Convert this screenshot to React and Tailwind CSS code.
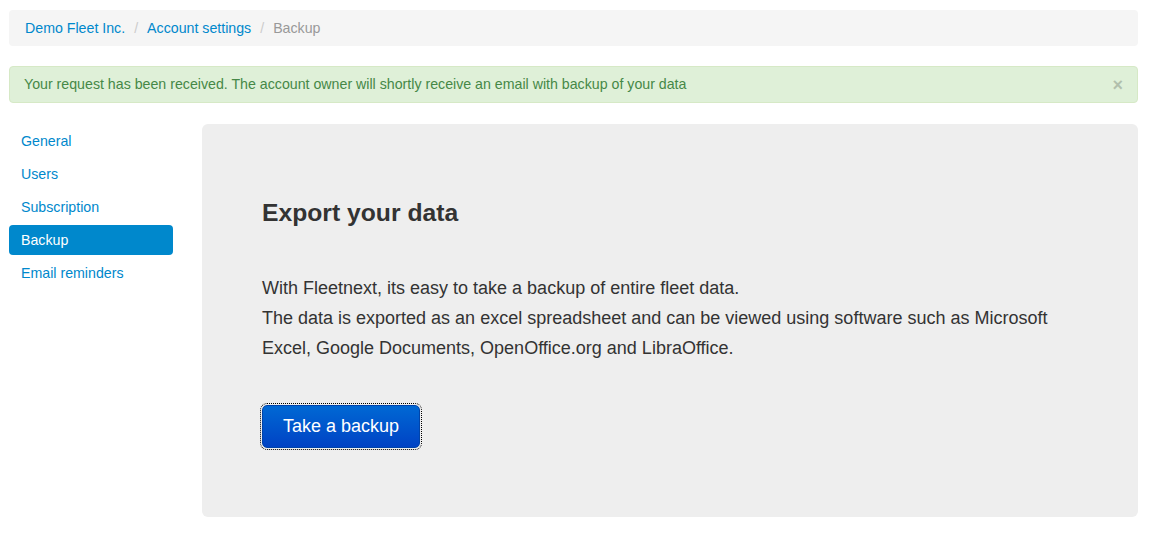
import React from 'react';

const navItems = ['General', 'Users', 'Subscription', 'Backup', 'Email reminders'];

export default function App() {
  return (
    <div className="min-h-[537px] bg-white pl-[9px] pr-[22px] pt-[10px] text-[14.2px] text-[#333] font-['Liberation_Sans',Arial,sans-serif]">
      {/* breadcrumb */}
      <div className="flex h-[36px] items-center rounded-[4px] bg-[#f5f5f5] px-4 pt-px">
        <a className="text-[#0088cc]">Demo Fleet Inc.</a>
        <span className="px-[9px] text-[#ccc]">/</span>
        <a className="text-[#0088cc]">Account settings</a>
        <span className="px-[9px] text-[#ccc]">/</span>
        <span className="text-[#999]">Backup</span>
      </div>

      {/* alert */}
      <div className="mt-[20px] flex h-[37px] items-center justify-between rounded-[4px] border border-[#d6e9c6] bg-[#dff0d8] pl-[14px] pr-[14px] text-[#468847]">
        <span>Your request has been received. The account owner will shortly receive an email with backup of your data</span>
        <span className="text-[18px] font-bold leading-none text-black opacity-20">×</span>
      </div>

      <div className="mt-[21px] flex gap-[29px]">
        <ul className="flex w-[164px] shrink-0 flex-col gap-[3px] pt-[2px]">
          {navItems.map((item) => (
            <li
              key={item}
              className={
                item === 'Backup'
                  ? 'flex h-[30px] items-center rounded-[4px] bg-[#0088cc] px-3 pt-px text-white'
                  : 'flex h-[30px] items-center px-3 pt-px text-[#0088cc]'
              }
            >
              {item}
            </li>
          ))}
        </ul>

        <div className="flex-1 rounded-[6px] bg-[#eeeeee] px-[60px] pt-[76px] pb-[69px]">
          <h1 className="text-[24.7px] font-bold leading-[26px] text-[#333]">Export your data</h1>
          <p className="mt-[47px] text-[18px] leading-[30px] text-[#333]">
            With Fleetnext, its easy to take a backup of entire fleet data.
            <br />
            The data is exported as an excel spreadsheet and can be viewed using software such as Microsoft Excel, Google Documents, OpenOffice.org and LibraOffice.
          </p>
          <div className="mt-[42px]">
            <button className="h-[43px] w-[158px] rounded-[5px] border border-[#0044aa] bg-gradient-to-b from-[#0068d4] to-[#0042c4] text-[18px] text-white outline-1 outline-offset-1 outline-dotted outline-black">
              Take a backup
            </button>
          </div>
        </div>
      </div>
    </div>
  );
}
